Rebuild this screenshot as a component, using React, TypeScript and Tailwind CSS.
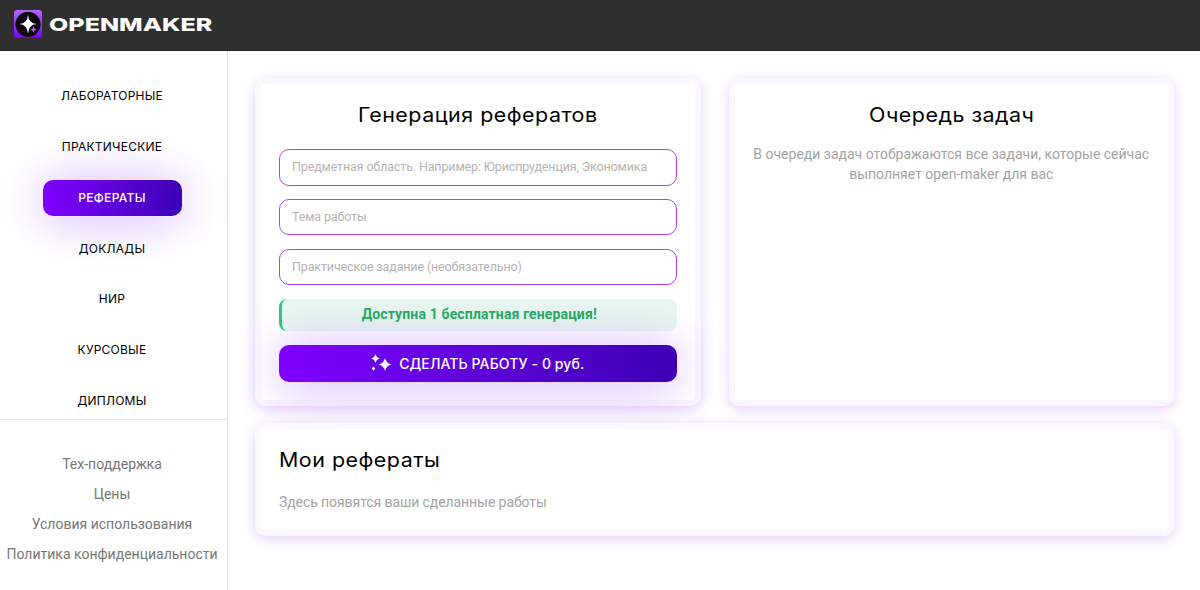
const menu = ['ЛАБОРАТОРНЫЕ', 'ПРАКТИЧЕСКИЕ', 'РЕФЕРАТЫ', 'ДОКЛАДЫ', 'НИР', 'КУРСОВЫЕ', 'ДИПЛОМЫ']

const links = ['Тех-поддержка', 'Цены', 'Условия использования', 'Политика конфиденциальности']

const card = 'rounded-[10px] border-[6px] border-[#faf7ff] bg-white bg-clip-padding px-[18px] shadow-[0_3px_14px_rgba(128,0,255,0.2)]'
const title = 'mt-[17px] scale-x-[1.100] text-[19.500px] leading-[28px] tracking-[0.450px]'
const input = 'block h-[36.500px] w-full rounded-[10px] border border-[#b03df5] bg-white px-3 pb-[1px] font-[Roboto] text-[12.500px] tracking-[-0.140px] placeholder:text-[#b4b4b4] outline-none'
const gradient = 'rounded-[10px] bg-gradient-to-r from-[#8000ff] to-[#3d00b5] text-white shadow-[0_3px_50px_rgba(128,0,255,0.33)]'

function Logo() {
    return (
        <svg className="size-7" viewBox="0 0 28 28">
            <defs>
                <linearGradient id="logo" x1="0" y1="0" x2="0" y2="1">
                    <stop offset="0" stopColor="#b566ff" />
                    <stop offset="1" stopColor="#7b00ff" />
                </linearGradient>
            </defs>
            <rect width="28" height="28" rx="3" fill="url(#logo)" />
            <circle cx="14" cy="14.3" r="12.6" fill="#0c0a10" />
            <path d="M14 4.800Q14.700 13.400 22.500 14.100Q14.700 14.800 14 23.400Q13.300 14.800 5.500 14.100Q13.300 13.400 14 4.800Z" fill="#fff" />
            <path d="M19.500 16.500Q19.800 19.200 22.300 19.500Q19.800 19.800 19.500 22.500Q19.200 19.800 16.700 19.500Q19.200 19.200 19.500 16.500Z" fill="#b566ff" stroke="#b566ff" strokeWidth="0.3" />
        </svg>
    )
}

function Sparkles() {
    return (
        <svg className="h-[18px] w-[21px]" viewBox="0 0 21 18" fill="#fff">
            <path d="M14 4Q15.200 9.300 20.500 10.500Q15.200 11.700 14 17Q12.800 11.700 7.500 10.500Q12.800 9.300 14 4Z" />
            <path d="M4.500 0Q5.400 3.600 9 4.500Q5.400 5.400 4.500 9Q3.600 5.400 0 4.500Q3.600 3.600 4.500 0Z" />
            <path d="M2.500 12.500L4.300 14.500L2.500 16.500L0.700 14.500Z" />
        </svg>
    )
}

export default function App() {
    return (
        <div className="flex h-[590px] flex-col overflow-hidden bg-white font-[Inter,sans-serif] text-black">
            <header className="flex h-[50.500px] shrink-0 items-center gap-[7px] border-b border-[#222] bg-[#2f2f2f] pb-[2px] pl-[14px]">
                <Logo />
                <span className="mt-[2px] origin-left scale-x-[1.390] text-[18px] leading-none font-extrabold text-white">OPENMAKER</span>
            </header>

            <div className="flex flex-1">
                <aside className="flex w-[228px] shrink-0 flex-col border-r border-[#e2e2e2]">
                    <nav className="flex h-[369.500px] flex-col items-center gap-[14.200px] border-b border-[#e2e2e2] pt-[27.500px] pr-[3px]">
                        {menu.map(item => (
                            <a
                                key={item}
                                className={`flex h-[36.600px] w-[139px] shrink-0 items-center justify-center text-[12px] whitespace-nowrap ${item === 'РЕФЕРАТЫ' ? `font-medium tracking-[0.300px] ${gradient}` : 'tracking-[0.250px]'}`}
                            >
                                {item}
                            </a>
                        ))}
                    </nav>
                    <div className="flex flex-col items-center pt-[30px] pr-[3px] font-[Roboto] text-[14px] leading-[29.900px] text-[#777]">
                        {links.map(link => <a key={link} className="whitespace-nowrap">{link}</a>)}
                    </div>
                </aside>

                <main className="flex flex-1 flex-col gap-[17px] pt-[27.500px] pr-[26px] pl-[27px]">
                    <div className="grid h-[328px] grid-cols-2 gap-[28px]">
                        <section className={card}>
                            <h2 className={`text-center ${title}`}>Генерация рефератов</h2>
                            <div className="mt-[20px] space-y-[13.400px]">
                                <input className={input} placeholder="Предметная область. Например: Юриспруденция, Экономика" />
                                <input className={input} placeholder="Тема работы" />
                                <input className={input} placeholder="Практическое задание (необязательно)" />
                            </div>
                            <div className="mt-[13.400px] flex h-[32.500px] items-center justify-center rounded-lg border-l-[3px] border-[#2ecc71] bg-[#e8f8f0] font-[Roboto] text-[14px] font-bold tracking-[0.150px] text-[#27a862]">
                                Доступна 1 бесплатная генерация!
                            </div>
                            <button className={`mt-[14px] flex h-[36.500px] w-full items-center justify-center gap-[7px] text-[14px] font-medium ${gradient}`}>
                                <Sparkles />
                                <span className="tracking-[0.100px]">СДЕЛАТЬ РАБОТУ - 0 руб.</span>
                            </button>
                        </section>

                        <section className={card}>
                            <h2 className={`text-center ${title}`}>Очередь задач</h2>
                            <p className="mt-[16px] text-center font-[Roboto] text-[14px] leading-[19.500px] whitespace-nowrap text-[#a3a3a3]">
                                В очереди задач отображаются все задачи, которые сейчас<br />выполняет open-maker для вас
                            </p>
                        </section>
                    </div>

                    <section className={`h-[113px] ${card}`}>
                        <h2 className={`origin-left ${title}`}>Мои рефераты</h2>
                        <p className="mt-[18px] font-[Roboto] text-[14px] leading-[20px] tracking-[-0.080px] text-[#a3a3a3]">Здесь появятся ваши сделанные работы</p>
                    </section>
                </main>
            </div>
        </div>
    )
}
